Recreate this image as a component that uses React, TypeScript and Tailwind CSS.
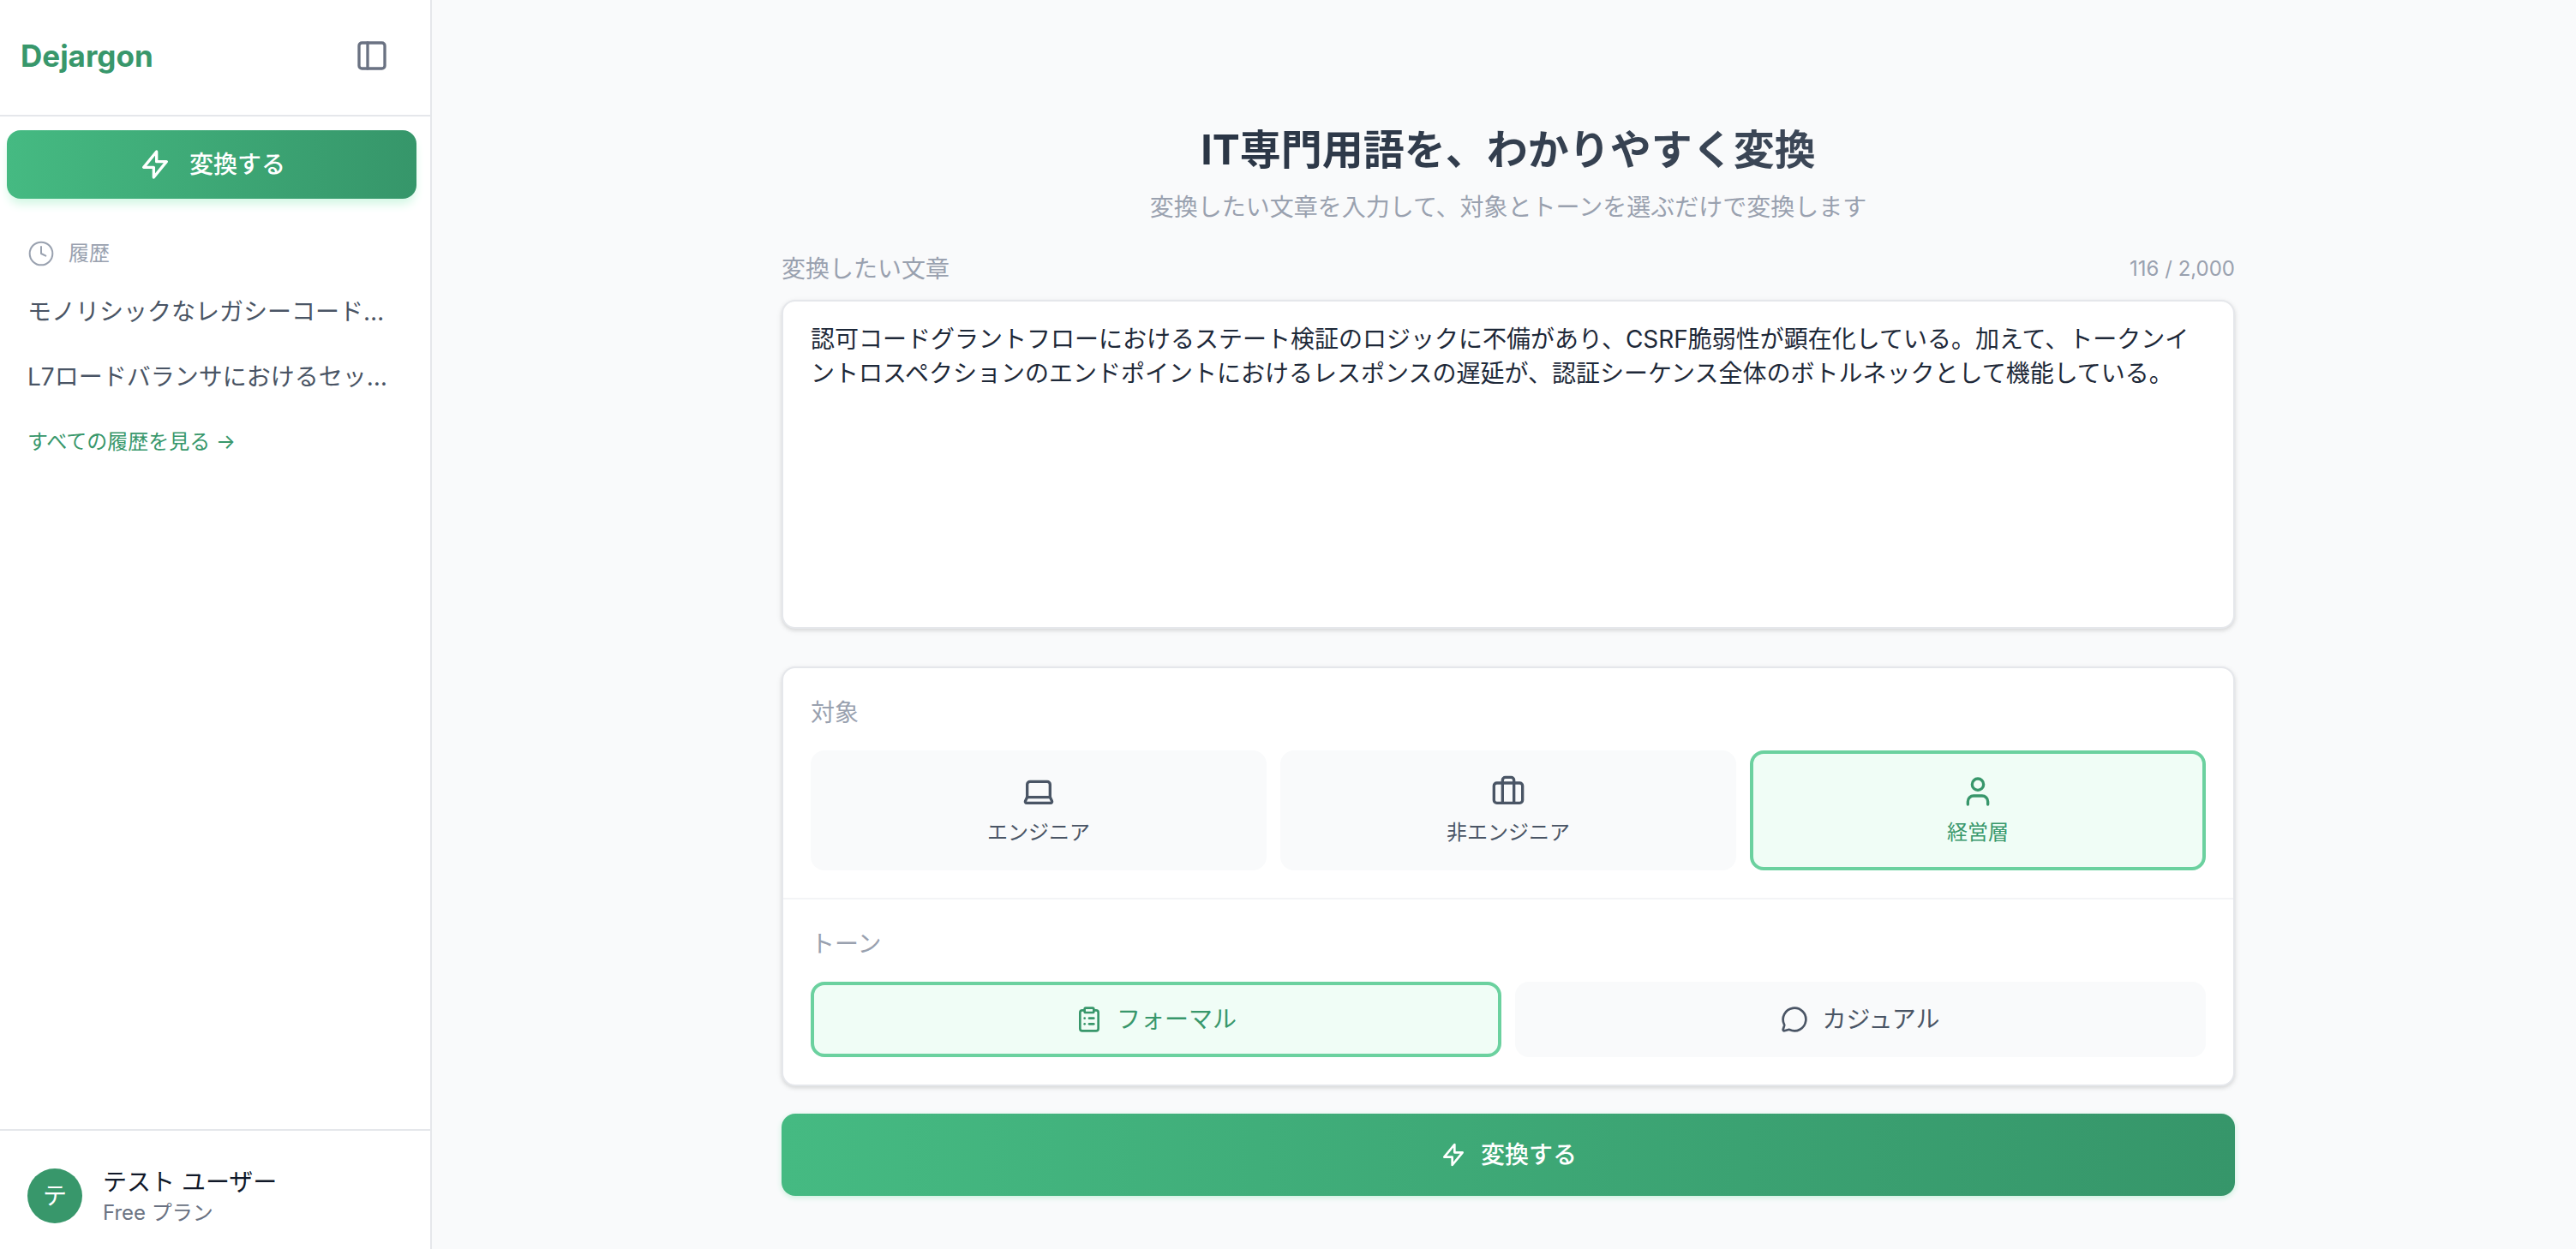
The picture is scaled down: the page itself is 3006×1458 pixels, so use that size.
import { useState } from "react";
import { Briefcase, ClipboardList, Clock, Laptop, MessageCircle, PanelLeft, User } from "lucide-react";
import type { LucideIcon } from "lucide-react";
import { clsx } from "clsx";

const MAX_LENGTH = 2000;

const INITIAL_TEXT =
  "認可コードグラントフローにおけるステート検証のロジックに不備があり、CSRF脆弱性が顕在化している。加えて、トークンイントロスペクションのエンドポイントにおけるレスポンスの遅延が、認証シーケンス全体のボトルネックとして機能している。";

interface Option {
  id: string;
  label: string;
  icon: LucideIcon;
}

const audiences: Option[] = [
  { id: "engineer", label: "エンジニア", icon: Laptop },
  { id: "non-engineer", label: "非エンジニア", icon: Briefcase },
  { id: "executive", label: "経営層", icon: User },
];

const tones: Option[] = [
  { id: "formal", label: "フォーマル", icon: ClipboardList },
  { id: "casual", label: "カジュアル", icon: MessageCircle },
];

const history = [
  { id: 1, title: "モノリシックなレガシーコード…" },
  { id: 2, title: "L7ロードバランサにおけるセッ…" },
];

function BoltIcon({ className }: { className?: string }) {
  return (
    <svg
      className={className}
      viewBox="0 0 24 24"
      fill="none"
      stroke="currentColor"
      strokeWidth={2}
      strokeLinecap="round"
      strokeLinejoin="round"
      aria-hidden="true"
    >
      <path d="M13 10V3L4 14h7v7l9-11h-7z" />
    </svg>
  );
}

function Sidebar() {
  return (
    <aside className="flex w-[504px] shrink-0 flex-col border-r-2 border-gray-200 bg-white">
      <div className="flex h-[136px] items-center justify-between border-b-2 border-gray-200 pr-8 pb-1 pl-6">
        <a href="#" className="text-[35px] leading-10 font-bold text-[#38976b]">
          Dejargon
        </a>
        <button type="button" aria-label="サイドバーを閉じる" className="rounded-xl p-4">
          <PanelLeft className="size-10 text-gray-500" />
        </button>
      </div>

      <div className="flex-1 pt-4 pr-4 pl-2">
        <button
          type="button"
          className="flex h-20 w-full items-center justify-center gap-5 rounded-2xl bg-linear-to-r from-[#45ba82] to-[#36966a] text-[28px] font-medium text-white shadow-[0_8px_12px_-2px_#d1f7e3]"
        >
          <BoltIcon className="size-10" />
          変換する
        </button>

        <div className="mt-12 flex items-center gap-4 px-6 text-2xl leading-8 text-gray-400">
          <Clock className="size-8" strokeWidth={1.5} />
          <h2>履歴</h2>
        </div>

        <nav className="mt-4 flex flex-col gap-1">
          {history.map((item) => (
            <a
              key={item.id}
              href="#"
              className="truncate rounded-xl px-6 py-4 text-[28px] leading-10 text-gray-600"
            >
              {item.title}
            </a>
          ))}
          <a href="#" className="px-6 py-5 text-2xl leading-8 text-[#38976b]">
            すべての履歴を見る →
          </a>
        </nav>
      </div>

      <div className="flex items-center gap-6 border-t-2 border-gray-200 px-8 pt-10 pb-[26px]">
        <div className="flex size-16 items-center justify-center rounded-full bg-[#38976b] text-[28px] text-white">
          テ
        </div>
        <div>
          <p className="text-[28px] leading-10 text-gray-900">テスト ユーザー</p>
          <p className="text-2xl leading-8 text-gray-500">Free プラン</p>
        </div>
      </div>
    </aside>
  );
}

interface OptionButtonProps {
  option: Option;
  selected: boolean;
  stacked?: boolean;
  onSelect: (id: string) => void;
}

function OptionButton({ option, selected, stacked = false, onSelect }: OptionButtonProps) {
  const Icon = option.icon;

  return (
    <button
      type="button"
      aria-pressed={selected}
      onClick={() => onSelect(option.id)}
      className={clsx(
        "flex items-center justify-center rounded-2xl border-4",
        stacked ? "flex-col gap-3 py-6 text-2xl leading-8" : "gap-4 py-5 text-[28px] leading-10",
        selected
          ? "border-[#6bd19f] bg-[#f0fdf6] text-[#38976b]"
          : "border-transparent bg-gray-50 text-gray-600"
      )}
    >
      <Icon className={stacked ? "size-10" : "size-8"} />
      {option.label}
    </button>
  );
}

export default function App() {
  const [text, setText] = useState(INITIAL_TEXT);
  const [audience, setAudience] = useState("executive");
  const [tone, setTone] = useState("formal");

  return (
    <div className="flex min-h-screen bg-gray-50 font-['Inter','Noto_Sans_CJK_JP',sans-serif]">
      <Sidebar />

      <main className="min-w-0 flex-1 pt-36 pb-12 pl-[10px]">
        <div className="mx-auto flex max-w-[1696px] flex-col">
          <h1 className="bg-linear-to-r from-gray-800 to-gray-600 bg-clip-text text-center text-5xl leading-[62px] font-bold text-transparent">
            IT専門用語を、わかりやすく変換
          </h1>
          <p className="mt-4 text-center text-[28px] leading-10 text-gray-400">
            変換したい文章を入力して、対象とトーンを選ぶだけで変換します
          </p>

          <div className="mt-8 flex items-center justify-between text-gray-400">
            <label htmlFor="source" className="text-[28px] leading-10">
              変換したい文章
            </label>
            <span className="text-2xl leading-8">
              {text.length} / {MAX_LENGTH.toLocaleString("en-US")}
            </span>
          </div>
          <textarea
            id="source"
            value={text}
            maxLength={MAX_LENGTH}
            onChange={(e) => setText(e.target.value)}
            className="mt-4 h-96 w-full resize-none rounded-2xl border-2 border-gray-200 bg-white px-8 py-6 text-[28px] leading-10 text-gray-800 shadow-[0_2px_6px_rgba(0,0,0,0.1),0_2px_4px_rgba(0,0,0,0.06)] outline-none"
          />

          <div className="mt-11 rounded-2xl border-2 border-gray-200 bg-white shadow-[0_2px_6px_rgba(0,0,0,0.1),0_2px_4px_rgba(0,0,0,0.06)]">
            <section className="border-b-2 border-gray-100 p-8">
              <h2 className="text-[28px] leading-10 text-gray-400">対象</h2>
              <div className="mt-6 grid grid-cols-3 gap-4">
                {audiences.map((option) => (
                  <OptionButton
                    key={option.id}
                    option={option}
                    selected={option.id === audience}
                    stacked
                    onSelect={setAudience}
                  />
                ))}
              </div>
            </section>

            <section className="p-8">
              <h2 className="text-[28px] leading-10 text-gray-400">トーン</h2>
              <div className="mt-6 grid grid-cols-2 gap-4">
                {tones.map((option) => (
                  <OptionButton
                    key={option.id}
                    option={option}
                    selected={option.id === tone}
                    onSelect={setTone}
                  />
                ))}
              </div>
            </section>
          </div>

          <button
            type="button"
            className="mt-8 flex h-24 items-center justify-center gap-4 rounded-2xl bg-linear-to-r from-[#45ba82] to-[#36966a] text-[28px] font-medium text-white shadow-[0_2px_6px_#c9f0dc]"
          >
            <BoltIcon className="size-8" />
            変換する
          </button>
        </div>
      </main>
    </div>
  );
}
